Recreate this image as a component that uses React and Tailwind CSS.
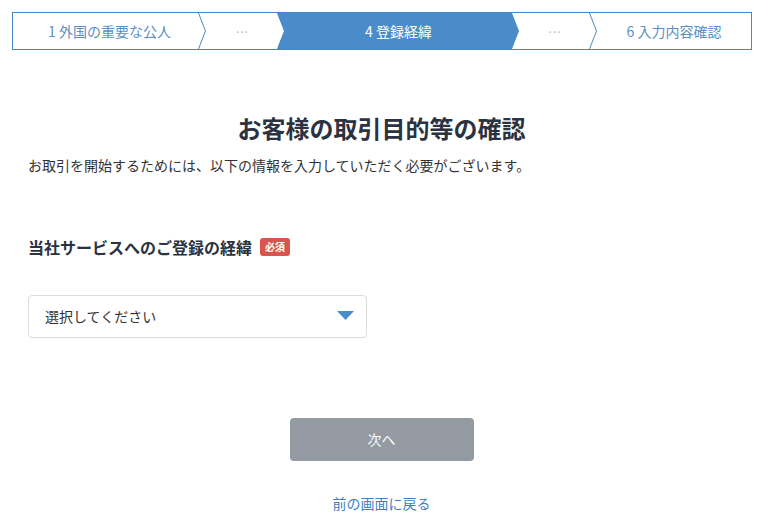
import { useState } from "react";

const font = "font-['Noto_Sans_CJK_JP','Noto_Sans',sans-serif]";

function Chevron() {
  return (
    <svg className="absolute top-0 right-[-7px] z-10 h-full w-[8px]" viewBox="0 0 8 36" preserveAspectRatio="none">
      <polygon points="0,0 7.5,18 0,36" fill="#ffffff" />
      <polyline points="0.5,0 7.5,18 0.5,36" fill="none" stroke="#4a88c5" strokeWidth="1" />
    </svg>
  );
}

function Stepper() {
  return (
    <div className="mx-[12px] mt-[12px] flex h-[38px] w-[740px] border border-[#4a88c5] text-[14px] leading-none">
      {/* 1 */}
      <div className="relative flex h-full w-[186px] items-center justify-center pl-[7px] text-[#5b8fc6]">
        1 外国の重要な公人
        <Chevron />
      </div>
      {/* 2 */}
      <div className="relative flex h-full w-[79px] items-center justify-center pl-[7px] text-[13px] text-[#aec3da]">
        …
        <Chevron />
      </div>
      {/* 4 active */}
      <div className="relative flex h-full w-[234px] items-center justify-center pl-[7px] text-white">
        <div className="absolute inset-y-0 left-0 right-[-7px] bg-[#4a8cca] [clip-path:polygon(0_0,calc(100%-7px)_0,100%_50%,calc(100%-7px)_100%,0_100%)]" />
        <span className="relative z-10">4 登録経緯</span>
      </div>
      {/* 5 */}
      <div className="relative flex h-full w-[78px] items-center justify-center pl-[7px] text-[13px] text-[#aec3da]">
        …
        <Chevron />
      </div>
      {/* 6 */}
      <div className="relative flex h-full flex-1 items-center justify-center pl-[7px] text-[#5b8fc6]">
        6 入力内容確認
      </div>
    </div>
  );
}

export default function App() {
  const [value, setValue] = useState("");

  return (
    <div className={`min-h-screen w-[769px] bg-white ${font}`}>
      <Stepper />

      <div className="pl-[28px] pr-[34px]">
        <h1 className="mt-[62px] text-center text-[24px] font-bold leading-[32px] text-[#2b3240]">
          お客様の取引目的等の確認
        </h1>
        <p className="mt-[11px] text-[14px] leading-[20px] text-[#333333]">
          お取引を開始するためには、以下の情報を入力していただく必要がございます。
        </p>

        <div className="mt-[60px] flex items-center">
          <span className="text-[16px] font-bold leading-[24px] text-[#2b3240]">当社サービスへのご登録の経緯</span>
          <span className="ml-[8px] rounded-[3px] bg-[#d9534f] px-[5px] py-[2px] text-[10px] font-bold leading-[14px] text-white">
            必須
          </span>
        </div>

        <div className="relative mt-[36px] h-[43px] w-[339px]">
          <select
            value={value}
            onChange={(e) => setValue(e.target.value)}
            className="h-full w-full appearance-none rounded-[4px] border border-[#dcdcdc] bg-white pl-[16px] text-[14px] text-[#333333] outline-none"
          >
            <option value="">選択してください</option>
          </select>
          <svg className="pointer-events-none absolute right-[13px] top-[16px] h-[9px] w-[17px]" viewBox="0 0 17 9">
            <polygon points="0,0 17,0 8.5,9" fill="#4a8cca" />
          </svg>
        </div>

        <div className="mt-[80px] flex justify-center">
          <button className="h-[43px] w-[184px] rounded-[4px] bg-[#939aa1] text-[14px] text-white">次へ</button>
        </div>

        <div className="mt-[29px] text-center">
          <a href="#" className="text-[14px] leading-[20px] text-[#3f7fc0]">
            前の画面に戻る
          </a>
        </div>
      </div>
    </div>
  );
}
